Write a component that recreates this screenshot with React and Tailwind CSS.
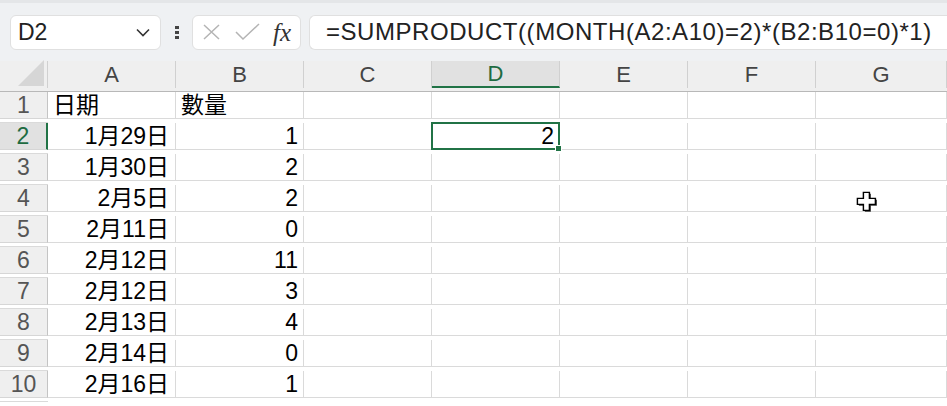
import React from 'react';

const rows = [
    ['日期', '數量'],
    ['1月29日', '1'],
    ['1月30日', '2'],
    ['2月5日', '2'],
    ['2月11日', '0'],
    ['2月12日', '11'],
    ['2月12日', '3'],
    ['2月13日', '4'],
    ['2月14日', '0'],
    ['2月16日', '1'],
];

const cols = ['A', 'B', 'C', 'D', 'E', 'F', 'G'];
const font = { fontFamily: '"Liberation Sans", "Noto Sans CJK TC", sans-serif' };

const App = () => {
    return (
        <div className="relative w-[947px] h-[406px] overflow-hidden bg-white text-black leading-none" style={font}>
            {/* formula bar */}
            <div className="h-[61px] bg-[#eff1f3] border-t-[3px] border-[#e4e6e8] flex items-center pl-[10px]">
                <div className="w-[151px] h-[35px] bg-white rounded-[6px] border border-[#e0e0e0] flex items-center justify-between pl-[7px] pr-[10px]">
                    <span className="text-[23px] text-[#222]">D2</span>
                    <svg width="14" height="9" viewBox="0 0 14 9">
                        <path d="M1 1.5 L7 7.5 L13 1.5" fill="none" stroke="#333" strokeWidth="1.6" />
                    </svg>
                </div>
                <div className="w-[31px] flex flex-col items-center gap-[2px]">
                    <span className="w-[4px] h-[3px] bg-[#444]" />
                    <span className="w-[4px] h-[3px] bg-[#444]" />
                    <span className="w-[4px] h-[3px] bg-[#444]" />
                </div>
                <div className="w-[109px] h-[35px] bg-white rounded-[6px] border border-[#e0e0e0] flex items-center pl-[9px]">
                    <svg width="20" height="16" viewBox="0 0 20 16">
                        <path d="M2 1 L17 15 M17 1 L2 15" stroke="#b4b4b4" strokeWidth="1.5" />
                    </svg>
                    <svg width="26" height="18" viewBox="0 0 26 18" className="ml-[13px]">
                        <path d="M1 9 L8 16 L24 1" fill="none" stroke="#b4b4b4" strokeWidth="1.5" />
                    </svg>
                    <span className="ml-[12px] text-[25px] italic text-[#333]" style={{ fontFamily: '"Liberation Serif", serif' }}>fx</span>
                </div>
                <div className="ml-[8px] flex-1 h-[35px] bg-white rounded-l-[6px] border border-r-0 border-[#e0e0e0] flex items-center pl-[16px]">
                    <span className="text-[24px] text-[#222] tracking-[0.55px] whitespace-nowrap">=SUMPRODUCT((MONTH(A2:A10)=2)*(B2:B10=0)*1)</span>
                </div>
            </div>

            {/* column headers */}
            <div className="grid grid-cols-[48px_128px_128px_128px_128px_128px_128px_1fr] h-[31px] bg-[#efefef] border-b border-[#b8b8b8]">
                <div className="relative border-r border-[#d0d0d0]">
                    <svg width="44" height="28" viewBox="0 0 44 28" className="absolute right-[3px] bottom-[2px]">
                        <path d="M44 2 L44 28 L18 28 Z" fill="#d6d6d6" />
                    </svg>
                </div>
                {cols.map((c) => (
                    <div
                        key={c}
                        className={
                            c === 'D'
                                ? 'flex items-center justify-center text-[22px] text-[#1e6b41] bg-[#e1e1e1] border-r border-[#d0d0d0] border-b-2 border-b-[#217346]'
                                : 'flex items-center justify-center text-[22px] text-[#444] border-r border-[#d0d0d0]'
                        }
                    >
                        {c}
                    </div>
                ))}
                <div />
            </div>

            {/* rows */}
            {rows.map((r, i) => (
                <div key={i} className="grid grid-cols-[48px_128px_128px_128px_128px_128px_128px_1fr] h-[31px]">
                    <div
                        className={
                            i === 1
                                ? 'flex items-center justify-center text-[23px] text-[#1e6b41] bg-[#e1e1e1] border-r-2 border-[#217346] border-b border-b-[#d6d6d6]'
                                : 'flex items-center justify-center text-[23px] text-[#555] bg-[#efefef] border-r border-[#c4c4c4] border-b border-b-[#d6d6d6]'
                        }
                    >
                        {i + 1}
                    </div>
                    <div className={`flex items-center ${i === 0 ? 'justify-start pl-[5px]' : 'justify-end pr-[6px]'} text-[23px] border-r border-b border-[#dadada]`}>
                        {r[0]}
                    </div>
                    <div className={`flex items-center ${i === 0 ? 'justify-start pl-[5px]' : 'justify-end pr-[5px]'} text-[23px] border-r border-b border-[#dadada]`}>
                        {r[1]}
                    </div>
                    <div className="border-r border-b border-[#dadada]" />
                    <div className="relative border-r border-b border-[#dadada]">
                        {i === 1 && (
                            <div className="absolute -left-[1px] -top-[1px] -right-[1px] -bottom-[1px] border-2 border-[#217346] flex items-center justify-end pr-[4px] text-[23px]">
                                2
                                <span className="absolute -right-[4px] -bottom-[4px] w-[7px] h-[7px] bg-[#217346] border border-white" />
                            </div>
                        )}
                    </div>
                    <div className="border-r border-b border-[#dadada]" />
                    <div className="border-r border-b border-[#dadada]" />
                    <div className="border-r border-b border-[#dadada]" />
                    <div className="border-b border-[#dadada]" />
                </div>
            ))}

            {/* cursor */}
            <svg width="24" height="24" viewBox="0 0 20 20" className="absolute left-[855px] top-[190px]">
                <path d="M7 2 H12 V7 H17 V12 H12 V17 H7 V12 H2 V7 H7 Z" fill="#333" transform="translate(1.2 1.2)" />
                <path d="M7 2 H12 V7 H17 V12 H12 V17 H7 V12 H2 V7 H7 Z" fill="white" stroke="black" strokeWidth="1.2" />
            </svg>
        </div>
    );
};

export default App;
